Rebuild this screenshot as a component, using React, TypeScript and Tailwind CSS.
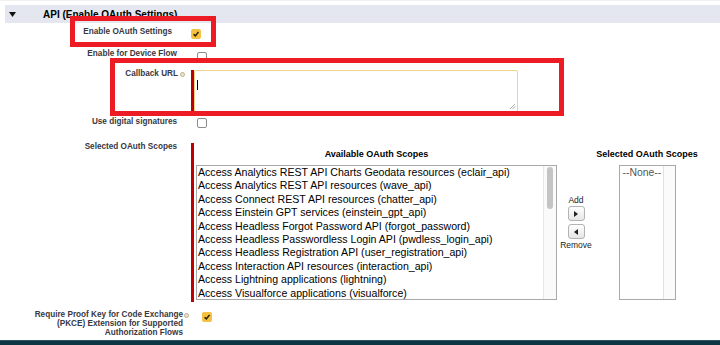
import React from "react"

const scopes: string[] = [
    "Access Analytics REST API Charts Geodata resources (eclair_api)",
    "Access Analytics REST API resources (wave_api)",
    "Access Connect REST API resources (chatter_api)",
    "Access Einstein GPT services (einstein_gpt_api)",
    "Access Headless Forgot Password API (forgot_password)",
    "Access Headless Passwordless Login API (pwdless_login_api)",
    "Access Headless Registration API (user_registration_api)",
    "Access Interaction API resources (interaction_api)",
    "Access Lightning applications (lightning)",
    "Access Visualforce applications (visualforce)",
]

const Checkbox = ({ checked }: { checked?: boolean }) => {
    if (checked) {
        return (
            <div className="w-[10px] h-[10px] rounded-[2px] bg-[#f5c142] flex items-center justify-center">
                <svg width="10" height="10" viewBox="0 0 10 10">
                    <path d="M2.6 5.2 L4.3 6.9 L7.5 3.1" fill="none" stroke="#2b2200" strokeWidth="1.5" />
                </svg>
            </div>
        )
    }
    return <div className="w-[10px] h-[10px] rounded-[2px] border border-[#8c8c8c] bg-white" />
}

const InfoDot = () => (
    <div className="w-[5px] h-[5px] rounded-full border border-[#bfb08c] bg-[#ebe3cd]" />
)

const label = "text-right text-[8.2px] leading-[10px] font-bold text-[#383842]"

const App = () => {
    return (
        <div className="w-[720px] h-[345px] bg-white relative overflow-hidden flex flex-col font-['Liberation_Sans',Arial,sans-serif]">
            <div className="h-[5px] bg-white border-t border-[#f1f1f1]" />

            {/* section header */}
            <div className="ml-[5px] h-[18px] bg-[#e4e7ef] flex items-center">
                <svg className="ml-[4px]" width="7" height="5" viewBox="0 0 7 5">
                    <polygon points="0,0 7,0 3.5,5" fill="#111" />
                </svg>
                <div className="ml-[27px] text-[10px] font-bold text-black">API (Enable OAuth Settings)</div>
            </div>

            <div className="flex flex-col mt-[4px]">
                {/* Enable OAuth Settings */}
                <div className="flex items-start h-[22px]">
                    <div className={`w-[172px] ${label}`}>Enable OAuth Settings</div>
                    <div className="ml-[19px] mt-[2px]">
                        <Checkbox checked />
                    </div>
                </div>

                {/* Enable for Device Flow */}
                <div className="flex items-start h-[20px]">
                    <div className={`w-[177px] ${label}`}>Enable for Device Flow</div>
                    <div className="ml-[20px] mt-[3px]">
                        <Checkbox />
                    </div>
                </div>

                {/* Callback URL */}
                <div className="flex items-start h-[48px]">
                    <div className={`w-[178px] ${label}`}>Callback URL</div>
                    <div className="ml-[2px] mt-[3px]">
                        <InfoDot />
                    </div>
                    <div className="ml-[6px] mt-[1px] flex h-[42px]">
                        <div className="w-[3px] bg-[#c00000]" />
                        <div className="relative w-[324px] h-[42px] border border-[#f0d48a] rounded-[2px] bg-white">
                            <div className="ml-[2px] mt-[9px] w-px h-[10px] bg-black" />
                            <svg className="absolute right-[1px] bottom-[1px]" width="7" height="7" viewBox="0 0 7 7">
                                <path d="M1 6 L6 1 M3.5 6 L6 3.5" stroke="#9a9a9a" strokeWidth="0.8" />
                            </svg>
                        </div>
                    </div>
                </div>

                {/* Use digital signatures */}
                <div className="flex items-start h-[24px]">
                    <div className={`w-[177px] ${label}`}>Use digital signatures</div>
                    <div className="ml-[20px] mt-[1px]">
                        <Checkbox />
                    </div>
                </div>

                {/* Selected OAuth Scopes */}
                <div className="flex items-start h-[170px]">
                    <div className={`w-[177px] ${label} mt-px`}>Selected OAuth Scopes</div>
                    <div className="ml-[14px] mt-[2px] h-[159px] border-l-[3px] border-[#c00000] pl-[2px] flex items-start">
                        <div className="w-[361px] flex flex-col items-center">
                            <div className="mt-[6px] text-[9px] leading-[11px] font-bold text-black">Available OAuth Scopes</div>
                            <div className="mt-[5px] w-[361px] h-[135px] border border-[#a9a9a9] flex bg-white">
                                <div className="flex-1 overflow-hidden pl-[1px]">
                                    {scopes.map((s) => (
                                        <div key={s} className="text-[10.6px] leading-[13.4px] text-black whitespace-nowrap">{s}</div>
                                    ))}
                                </div>
                                <div className="w-[13px] border-l border-[#e8e8e8] bg-[#fafafa]">
                                    <div className="ml-[3px] mt-[1px] w-[6px] h-[42px] rounded-full bg-[#c4c4c4]" />
                                </div>
                            </div>
                        </div>

                        <div className="w-[38px] flex flex-col items-center pt-[52px]">
                            <div className="text-[8.5px] leading-[10px] text-[#222]">Add</div>
                            <div className="mt-[1px] w-[17px] h-[15px] rounded-[3px] border border-[#b3b3b3] bg-gradient-to-b from-white to-[#e6e6e6] flex items-center justify-center">
                                <svg width="4" height="6" viewBox="0 0 4 6">
                                    <polygon points="0,0 4,3 0,6" fill="#222" />
                                </svg>
                            </div>
                            <div className="mt-[3px] w-[17px] h-[15px] rounded-[3px] border border-[#b3b3b3] bg-gradient-to-b from-white to-[#e6e6e6] flex items-center justify-center">
                                <svg width="4" height="6" viewBox="0 0 4 6">
                                    <polygon points="4,0 0,3 4,6" fill="#222" />
                                </svg>
                            </div>
                            <div className="mt-[1px] text-[8.5px] leading-[10px] text-[#222]">Remove</div>
                        </div>

                        <div className="w-[104px] flex flex-col items-center">
                            <div className="mt-[6px] text-[9px] leading-[11px] font-bold text-black whitespace-nowrap">Selected OAuth Scopes</div>
                            <div className="mt-[5px] w-[57px] h-[135px] border border-[#a9a9a9] flex bg-white">
                                <div className="flex-1 pl-[3px] text-[10.4px] leading-[13.5px] text-[#555]">--None--</div>
                                <div className="w-[12px] border-l border-[#e2e2e2] bg-[#fbfbfb]" />
                            </div>
                        </div>
                    </div>
                </div>

                {/* PKCE */}
                <div className="flex items-start h-[29px]">
                    <div className="w-[183px] text-right text-[8.2px] leading-[8.8px] font-bold text-[#383842]">
                        Require Proof Key for Code Exchange
                        <br />
                        (PKCE) Extension for Supported
                        <br />
                        Authorization Flows
                    </div>
                    <div className="ml-[1px] mt-[2px]">
                        <InfoDot />
                    </div>
                    <div className="ml-[13px] mt-[1px]">
                        <Checkbox checked />
                    </div>
                </div>
            </div>

            <div className="mt-auto h-[5px] bg-[#0d3441] border-t border-[#2d5560]" />

            {/* annotation boxes */}
            <div className="absolute left-[70px] top-[16px] w-[146px] h-[31px] border-[5px] border-[#ed1c24]" />
            <div className="absolute left-[110px] top-[58px] w-[454px] h-[58px] border-[5px] border-[#ed1c24]" />
        </div>
    )
}

export default App
